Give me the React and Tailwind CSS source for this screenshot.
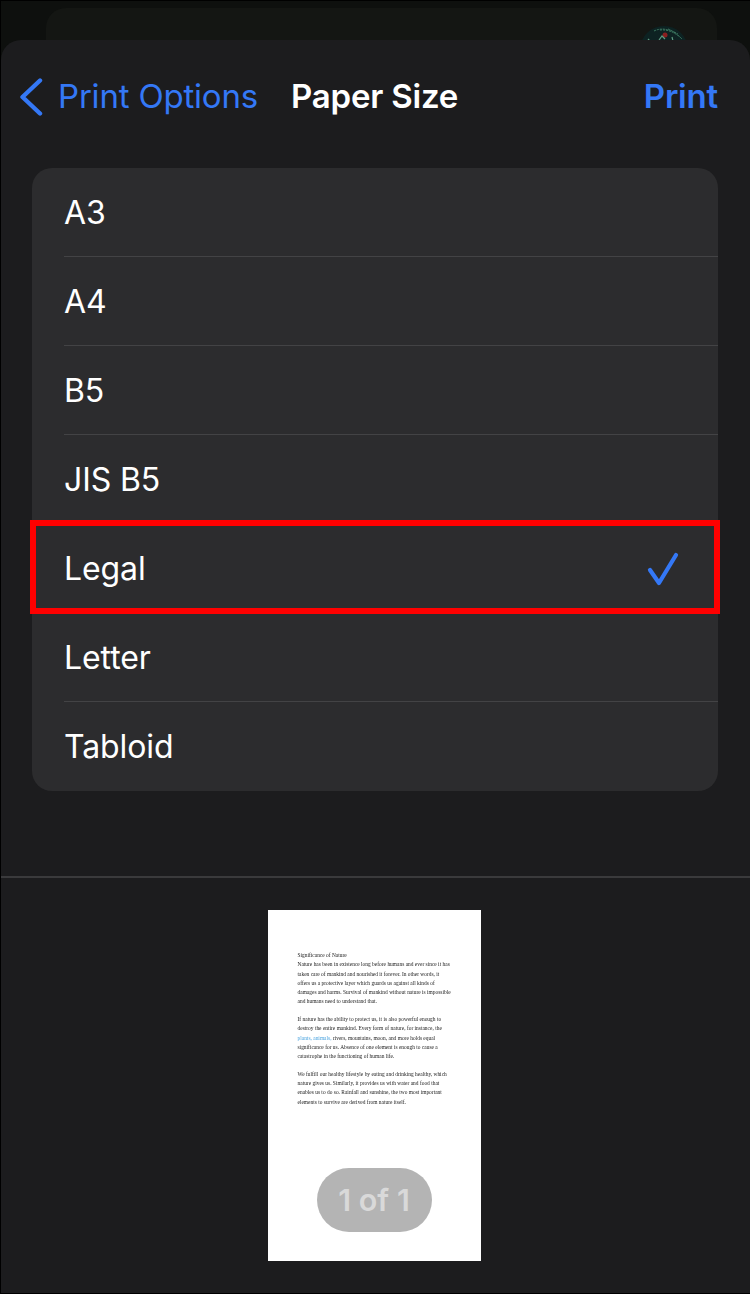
const sizes = ["A3", "A4", "B5", "JIS B5", "Legal", "Letter", "Tabloid"];

const paragraphs = [
  [
    "Significance of Nature",
    "Nature has been in existence long before humans and ever since it has",
    "taken care of mankind and nourished it forever. In other words, it",
    "offers us a protective layer which guards us against all kinds of",
    "damages and harms. Survival of mankind without nature is impossible",
    "and humans need to understand that.",
  ],
  [
    "If nature has the ability to protect us, it is also powerful enough to",
    "destroy the entire mankind. Every form of nature, for instance, the",
    <>
      <span className="text-[#4aa3df]">plants, animals,</span> rivers, mountains, moon, and more holds equal
    </>,
    "significance for us. Absence of one element is enough to cause a",
    "catastrophe in the functioning of human life.",
  ],
  [
    "We fulfill our healthy lifestyle by eating and drinking healthy, which",
    "nature gives us. Similarly, it provides us with water and food that",
    "enables us to do so. Rainfall and sunshine, the two most important",
    "elements to survive are derived from nature itself.",
  ],
];

const Avatar = () => (
  <svg width="48" height="48" viewBox="0 0 48 48" className="shrink-0">
    <circle cx="24" cy="24" r="24" fill="#0d2222" />
    <path d="M14 5 Q24 0 38 8 M20 4 Q30 3 40 11 M28 3 Q34 5 42 13" stroke="#3d7a62" strokeWidth="1" strokeDasharray="2 1" fill="none" />
    <circle cx="25" cy="9" r="2.5" fill="#8a1f1f" />
    <path d="M19 14 L22 10 L25 13 M32 11 L33 15 M8 13 L10 15" stroke="#5f9a80" strokeWidth="1.2" fill="none" />
  </svg>
);

export default function App() {
  return (
    <div
      className="flex h-[1294px] w-[750px] flex-col overflow-hidden border-t border-b border-l border-black bg-[#0e100e] text-white"
      style={{ fontFamily: 'Inter, "Liberation Sans", sans-serif' }}
    >
      {/* dimmed page behind the sheet */}
      <div className="h-[39px] shrink-0 overflow-hidden pt-[7px] pr-[33px] pl-[45px]">
        <div className="flex h-[60px] items-start justify-end rounded-t-[20px] bg-[#141613] pt-[18px] pr-[29px]">
          <Avatar />
        </div>
      </div>

      <div className="flex min-h-0 flex-1 flex-col rounded-t-[20px] bg-[#1c1c1e]">
        <header className="flex h-[128px] shrink-0 items-center pb-[15px]">
          <svg width="24" height="38" viewBox="0 0 24 38" fill="none" className="ml-[18px]">
            <path d="M21 2.5 L3.5 19 L21 35.5" stroke="#3478f6" strokeWidth="4.4" strokeLinecap="round" strokeLinejoin="round" />
          </svg>
          <span className="ml-[15px] w-[233px] whitespace-nowrap text-[33px] tracking-[-0.2px] text-[#3478f6]">Print Options</span>
          <span className="whitespace-nowrap text-[33px] font-semibold tracking-[-0.2px]">Paper Size</span>
          <span className="mr-[32px] ml-auto text-[33px] font-semibold tracking-[-0.2px] text-[#3478f6]">Print</span>
        </header>

        <ul className="mr-[32px] ml-[31px] shrink-0 rounded-[20px] bg-[#2c2c2e]">
          {sizes.map((size, i) => (
            <li key={size} className="relative flex h-[89px] pl-[32px]">
              <div className={`flex flex-1 items-center justify-between pt-[1px] pr-[39px] ${i < sizes.length - 1 ? "border-b border-[#434345]" : ""}`}>
                <span className="text-[32px] tracking-[-0.1px]">{size}</span>
                {size === "Legal" && (
                  <svg width="32" height="34" viewBox="0 0 32 34" fill="none">
                    <path d="M3 18 L12 31 L29 3" stroke="#3478f6" strokeWidth="4.2" strokeLinecap="round" strokeLinejoin="round" />
                  </svg>
                )}
              </div>
              {size === "Legal" && (
                <div className="absolute top-[-4px] right-[-2px] bottom-[-1px] left-[-2px] border-[6px] border-[#ff0000]" />
              )}
            </li>
          ))}
        </ul>

        <div className="mt-[85px] h-[2px] shrink-0 bg-[#3a3a3c]" />

        <div className="flex flex-1 justify-center pt-[32px] pr-[3px]">
          <div className="relative h-[351px] w-[213px] bg-white pt-[41px] pl-[30px]">
            <div
              className="flex flex-col gap-[8.5px] text-[5.4px] leading-[9.25px] tracking-[0.02px] whitespace-nowrap text-[#222] blur-[0.35px]"
              style={{ fontFamily: '"Liberation Serif", serif' }}
            >
              {paragraphs.map((lines, i) => (
                <p key={i}>
                  {lines.map((line, j) => (
                    <span key={j} className="block">{line}</span>
                  ))}
                </p>
              ))}
            </div>
            <div className="absolute top-[258px] left-[49px] flex h-[64px] w-[115px] items-center justify-center rounded-full bg-[#b4b4b4] text-[30.5px] font-semibold text-[#d9d9d9]">
              1 of 1
            </div>
          </div>
        </div>
      </div>
    </div>
  );
}
